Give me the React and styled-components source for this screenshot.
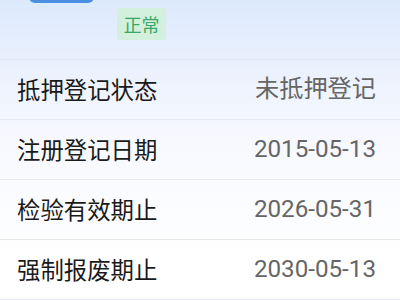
import React from "react";
import styled, { createGlobalStyle } from "styled-components";

const Global = createGlobalStyle`
  html, body { margin: 0; padding: 0; }
  body {
    width: 400px;
    height: 300px;
    overflow: hidden;
    font-family: "Noto Sans CJK SC", "Noto Sans", sans-serif;
    background: #ffffff;
  }
`;

const Page = styled.div`
  width: 400px;
  height: 300px;
  overflow: hidden;
  background: linear-gradient(180deg, #dce9fc 0px, #e9f0fd 60px, #f6f8fe 130px, #ffffff 260px);
`;

const Header = styled.div`
  height: 59px;
  position: relative;
  border-bottom: 1px solid #e3e8f0;
  box-sizing: content-box;
`;

const TopButton = styled.div`
  position: absolute;
  left: 29px;
  top: -30px;
  width: 65px;
  height: 33px;
  border-radius: 6px;
  background: #4b8fe2;
`;

const Badge = styled.span`
  position: absolute;
  left: 117px;
  top: 8px;
  height: 32px;
  padding: 0 6.5px;
  display: flex;
  align-items: center;
  border-radius: 3px;
  background: #d3f0dc;
  color: #38a86a;
  font-size: 18px;
  line-height: 1;
`;

const List = styled.div`
  display: flex;
  flex-direction: column;
`;

const Row = styled.div`
  height: 60px;
  box-sizing: border-box;
  display: flex;
  align-items: center;
  justify-content: space-between;
  padding: 0 24px 0 17px;
  border-bottom: 1px solid #e6e9ef;
`;

const Label = styled.span`
  font-size: 23.4px;
  color: #1a1a1a;
  line-height: 1;
`;

const Value = styled.span`
  font-family: Roboto, "Noto Sans CJK SC", sans-serif;
  font-size: 24.2px;
  color: #666666;
  line-height: 1;
`;

const rows = [
  ["抵押登记状态", "未抵押登记"],
  ["注册登记日期", "2015-05-13"],
  ["检验有效期止", "2026-05-31"],
  ["强制报废期止", "2030-05-13"],
];

export default function App() {
  return (
    <>
      <Global />
      <Page>
        <Header>
          <TopButton />
          <Badge>正常</Badge>
        </Header>
        <List>
          {rows.map(([l, v]) => (
            <Row key={l}>
              <Label>{l}</Label>
              <Value>{v}</Value>
            </Row>
          ))}
        </List>
      </Page>
    </>
  );
}
